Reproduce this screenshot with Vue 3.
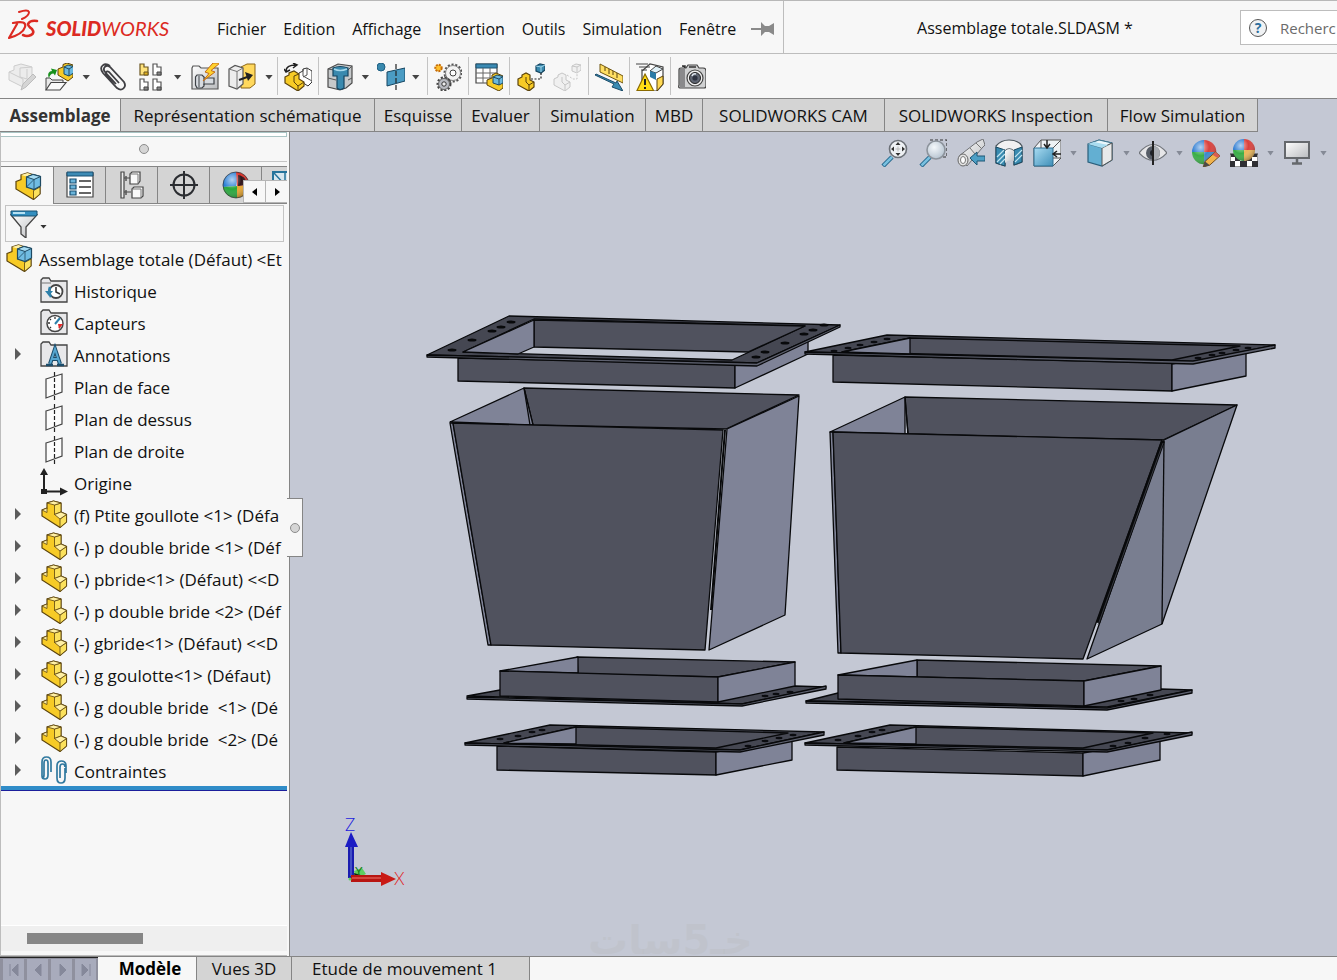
<script setup>
const menus = ['Fichier', 'Edition', 'Affichage', 'Insertion', 'Outils', 'Simulation', 'Fenêtre']

const toolGroups = [
  ['edit-part', 'open-asm', 'v', 'clip', 'pattern', 'v', 'fastener', 'move', 'v'],
  ['hidden'],
  ['feature', 'v', 'refgeo', 'v'],
  ['gears'],
  ['bom'],
  ['explode', 'explode-off'],
  ['measure'],
  ['perf'],
  ['camera'],
]

const ribbonTabs = [
  'Assemblage', 'Représentation schématique', 'Esquisse', 'Evaluer', 'Simulation',
  'MBD', 'SOLIDWORKS CAM', 'SOLIDWORKS Inspection', 'Flow Simulation',
]

const viewTools = [
  'zoom-fit', 'zoom-area', 'prev-view', 'section', 'orient', 'v', 'display', 'v',
  'eye', 'v', 'appearance', 'scene', 'v', 'monitor', 'v',
]

const panelTabs = ['asm', 'props', 'config', 'target', 'sphere', 'cam']

const tree = [
  { icon: 'history', label: 'Historique' },
  { icon: 'sensor', label: 'Capteurs' },
  { icon: 'annot', label: 'Annotations', open: true },
  { icon: 'plane', label: 'Plan de face' },
  { icon: 'plane', label: 'Plan de dessus' },
  { icon: 'plane', label: 'Plan de droite' },
  { icon: 'origin', label: 'Origine' },
  { icon: 'part', label: '(f) Ptite goullote <1> (Défa', open: true },
  { icon: 'part', label: '(-) p double bride <1> (Déf', open: true },
  { icon: 'part', label: '(-) pbride<1> (Défaut) <<D', open: true },
  { icon: 'part', label: '(-) p double bride <2> (Déf', open: true },
  { icon: 'part', label: '(-) gbride<1> (Défaut) <<D', open: true },
  { icon: 'part', label: '(-) g goulotte<1> (Défaut)', open: true },
  { icon: 'part', label: '(-) g double bride  <1> (Dé', open: true },
  { icon: 'part', label: '(-) g double bride  <2> (Dé', open: true },
  { icon: 'mates', label: 'Contraintes', open: true },
]

const navButtons = [
  { name: 'Premier', d: 'M7 5V17M15 5L9 11L15 17Z' },
  { name: 'Précédent', d: 'M14 5L8 11L14 17Z' },
  { name: 'Suivant', d: 'M9 5L15 11L9 17Z' },
  { name: 'Dernier', d: 'M15 5V17M7 5L13 11L7 17Z' },
]

const holes = [
  [511, 322], [501, 327], [492, 331], [472, 340], [452, 350],
  [813, 330], [804, 334], [785, 343], [765, 352], [756, 357], [824, 325],
]
const smallHoles = [
  [887, 339], [874, 342], [860, 345], [848, 348], [834, 351],
  [1248, 348], [1236, 350], [1222, 353], [1212, 355], [1198, 358],
  [542, 730], [532, 732], [518, 736], [500, 739], [793, 735], [779, 738], [765, 741], [748, 746],
  [882, 730], [872, 732], [858, 736], [838, 740], [1167, 734], [1145, 738], [1128, 743], [1113, 746],
  [790, 692], [776, 694], [765, 696], [1150, 695], [1134, 699], [1121, 701],
]
</script>

<template>
  <div class="app">
    <svg class="defs" aria-hidden="true">
      <defs>
        <linearGradient id="g-steel" x1="0" y1="0" x2="1" y2="1"><stop offset="0" stop-color="#fff" /><stop offset="1" stop-color="#b9bbbe" /></linearGradient>
        <linearGradient id="g-blue" x1="0" y1="0" x2="1" y2="1"><stop offset="0" stop-color="#a9dcf2" /><stop offset="1" stop-color="#3f8fb8" /></linearGradient>
        <radialGradient id="g-lens" cx=".4" cy=".35" r=".7"><stop offset="0" stop-color="#f4f8fb" /><stop offset="1" stop-color="#b3c1ce" /></radialGradient>
        <radialGradient id="g-shade" cx=".35" cy=".3" r=".8"><stop offset="0" stop-color="#fff" stop-opacity=".65" /><stop offset=".45" stop-color="#fff" stop-opacity="0" /><stop offset="1" stop-color="#000" stop-opacity=".4" /></radialGradient>
      </defs>
      <symbol id="part" viewBox="0 0 28 28">
        <path d="M2 10L7 8V3L13.500 1L21 3V12L26.500 14.500V22L20 27.500L2 16Z" fill="#f7cb26" stroke="#5b430d" stroke-width="1.200" />
        <path d="M14.500 5L21 3V12L14.500 14.500ZM20 19L26.500 14.500V22L20 27.500Z" fill="#fbe15c" stroke="#5b430d" stroke-width=".8" />
        <path d="M7 3L13.500 1L21 3L14.500 5ZM14.500 14.500L21 12L26.500 14.500L20 19ZM2 10L7 8V12.500Z" fill="#fff0a5" stroke="#5b430d" stroke-width=".8" />
      </symbol>
      <symbol id="asm" viewBox="0 0 28 28">
        <path d="M2 9.500L7 7.500V3L13.500 1L26 5V22L19.500 27.500L2 17Z" fill="#f7cb26" stroke="#5b430d" stroke-width="1.200" />
        <path d="M7 3L13.500 1L18 2.500L12.500 4.500Z" fill="#fff0a5" />
        <path d="M19.500 18.500L26 15V22L19.500 27.500Z" fill="#fbe15c" stroke="#5b430d" stroke-width=".8" />
        <path d="M12.500 5L19 2.500L26.500 4.500V14L20 17.500L12.500 15Z" fill="#70bce2" stroke="#1e4a63" stroke-width="1.200" />
        <path d="M12.500 5L19 2.500L26.500 4.500L20 7.500Z" fill="#a7dcf3" stroke="#1e4a63" />
        <path d="M20 7.500V17.500M12.500 15L20 7.500" fill="none" stroke="#1e4a63" stroke-width=".8" />
      </symbol>
      <symbol id="edit-part" viewBox="0 0 28 28">
        <g fill="#ececec" stroke="#cdcdcd">
          <path d="M1 9L6 7V3L13 1L24 4V17L15 24L1 17Z" /><path d="M12 5L24 4M12 5V14L19 16V6M1 9L15 16V24" fill="none" />
          <path d="M13 27L15 21L25 11L28 14L18 24Z" fill="#d5d5d5" stroke="#bdbdbd" />
        </g>
      </symbol>
      <symbol id="open-asm" viewBox="0 0 28 28">
        <path d="M13 6L18 4V1.500L22 0L28 2V14L23 18L13 12Z" fill="#f7cb26" stroke="#5b430d" />
        <path d="M19 4L23 2L28.500 3.500V10L24 13L19 11Z" fill="#6bb9de" stroke="#1e4a63" /><path d="M19 4L24 6V13M24 6L28 3.500" fill="none" stroke="#1e4a63" />
        <path d="M1 27V15H5L7 17H18V20" fill="#e9e9e9" stroke="#444" /><path d="M1 27L6 19.500H21L15 27Z" fill="#fafafa" stroke="#444" stroke-width="1.200" />
        <path d="M4 15C2 11 4 8 7 8L6 5.500L12 7L10 12.500L8.500 10.500C6 10.500 5 12 4 15Z" fill="#18911d" />
      </symbol>
      <symbol id="clip" viewBox="0 0 28 28">
        <path d="M17 21L6 9C3 5 7 1 11 4L25 19C28 24 23 29 18 25L4 10C-1 3 6-1 11 3M20 20L10 9C7 7 6 11 8 12L16 20" fill="none" stroke="#3f3f43" stroke-width="1.800" />
      </symbol>
      <symbol id="pattern" viewBox="0 0 28 28">
        <g fill="#fff" stroke="#555" stroke-width="1.200">
          <path d="M3 1H7V4H11V12H3Z" fill="#ffe37c" stroke="#6b5520" /><path d="M16 1H20V4H24V12H16ZM3 16H7V19H11V27H3ZM16 16H20V19H24V27H16Z" />
        </g>
        <path d="M7 9H11V12H7Z" fill="#e0b11c" stroke="#6b5520" /><path d="M20 9H24V12H20ZM7 24H11V27H7ZM20 24H24V27H20Z" fill="#888" stroke="#444" />
      </symbol>
      <symbol id="fastener" viewBox="0 0 28 28">
        <path d="M1 5L2 3H8L10 5H27V26H1Z" fill="url(#g-steel)" stroke="#555" stroke-width="1.200" />
        <path d="M6 12H11L13 14V15H23V21H13V23L11 25H6L4.500 22V14Z" fill="#d7dbe0" stroke="#3e4247" stroke-width="1.200" /><path d="M8 13V24M13 15V22" stroke="#3e4247" />
        <path d="M22 0L14 9L18 10.500L12 18L24 9L20 7.500L29 0Z" fill="#ffd22e" stroke="#c36a16" />
      </symbol>
      <symbol id="move" viewBox="0 0 28 28">
        <path d="M13 4L19 1H27V21L22 25H13Z" fill="#ffd85d" stroke="#8b6515" /><path d="M1 6L7 2.500L15 5V21L9 26L1 23Z" fill="#ededed" stroke="#555" stroke-width="1.200" /><path d="M1 6L9 8.500L15 5M9 8.500V26" fill="none" stroke="#777" />
        <path d="M11 17L22 13" stroke="#222" stroke-width="2" /><path d="M17 9L25 12L20 18Z" fill="#222" />
      </symbol>
      <symbol id="hidden" viewBox="0 0 28 28">
        <path d="M15 10L19 8V6L23 5L28 8V19L24 23L13 16Z" fill="#fff" stroke="#333" /><path d="M19 6V13L28 18M23 5V12L19 14" fill="none" stroke="#555" />
        <path d="M1 14L5 12V10L10 8L15 11V16L20 19V23L14 28L1 20Z" fill="#f7cb26" stroke="#5b430d" stroke-width="1.200" /><path d="M14 23L20 19M10 13L15 11M10 13V19L14 23V28" fill="none" stroke="#5b430d" />
        <path d="M2 8C2 3 6 2 12 2M9 0L13 2L9 5M0 6L2 9L6 7" fill="none" stroke="#222" stroke-width="1.500" />
      </symbol>
      <symbol id="feature" viewBox="0 0 28 28">
        <path d="M2 6L12 1L26 3V20L20 25L14 27L2 24Z" fill="#c6c9cb" stroke="#4a4a4a" stroke-width="1.200" /><path d="M2 15L10 17M22 17L26 15M2 6L20 9L26 3" fill="none" stroke="#555" />
        <path d="M7 5Q14 2 22 5V13H18V25Q14 28 11 25V13H7Z" fill="#3989ae" stroke="#164560" stroke-width="1.200" /><path d="M8 6Q14 9 21 6" stroke="#a7d9ec" fill="none" stroke-width="1.500" />
      </symbol>
      <symbol id="refgeo" viewBox="0 0 28 28">
        <circle cx="4" cy="4" r="4" fill="#3989ae" stroke="#1f5f82" /><path d="M10 9L28 5V18L10 23Z" fill="#4b9cc4" stroke="#164560" /><path d="M19 1V27" stroke="#222" stroke-dasharray="5 2" stroke-width="1.200" />
      </symbol>
      <symbol id="gears" viewBox="0 0 28 28">
        <circle cx="19" cy="10" r="8" fill="none" stroke="#555" stroke-width="3" stroke-dasharray="2 1.600" /><circle cx="19" cy="10" r="7.500" fill="#f3f3f3" stroke="#888" /><circle cx="19" cy="10" r="3" fill="#fff" stroke="#444" />
        <circle cx="10" cy="21" r="6" fill="none" stroke="#444" stroke-width="3" stroke-dasharray="2 1.500" /><circle cx="10" cy="21" r="5.500" fill="#b8bac0" stroke="#666" /><circle cx="10" cy="21" r="2.200" fill="#eee" stroke="#333" />
        <circle cx="4.500" cy="5" r="3.200" fill="#ffc02d" stroke="#c56c0b" stroke-width="2" stroke-dasharray="2 1" />
      </symbol>
      <symbol id="bom" viewBox="0 0 28 28">
        <path d="M1 1H22V20H1Z" fill="#fff" stroke="#444" stroke-width="1.200" /><path d="M1 1H22V5H1Z" fill="#3b8ab3" stroke="#1f5473" /><path d="M1 10H22M1 15H22M8 5V20M15 5V20" stroke="#666" />
        <path d="M12 17L17 15V12L21 10L28 13V25L24 28L12 22Z" fill="#f7cb26" stroke="#5b430d" /><path d="M18 14L22 12L28 13.500V20L24 22L18 20Z" fill="#6bb9de" stroke="#1e4a63" /><path d="M18 14L24 16L28 13.500M24 16V22" fill="none" stroke="#1e4a63" />
      </symbol>
      <symbol id="explode" viewBox="0 0 28 28">
        <path d="M1 16L5 14V12L9 10L13 12V17L17 19V24L12 28L1 22Z" fill="#f7cb26" stroke="#5b430d" stroke-width="1.200" /><path d="M9 14V19L12 22V28M12 22L17 19" fill="none" stroke="#5b430d" />
        <path d="M19 3L23 1L28 2V7L24 10L19 8Z" fill="#3989ae" stroke="#164560" stroke-width="1.200" /><path d="M19 3L24 4L28 2M24 4V9" fill="none" stroke="#a5d7eb" /><path d="M14 16H24V10" fill="none" stroke="#222" stroke-dasharray="2 1.500" stroke-width="1.200" />
      </symbol>
      <symbol id="explode-off" viewBox="0 0 28 28">
        <g fill="#f0f0f0" stroke="#c6c6c6"><path d="M1 16L5 14V12L9 10L13 12V17L17 19V24L12 28L1 22Z" /><path d="M9 14V19L12 22V28M12 22L17 19" /><path d="M19 3L23 1L28 2V7L24 10L19 8Z" /><path d="M19 3L24 4L28 2M24 4V9" /><path d="M14 12L20 16H24V10" fill="none" stroke-dasharray="2 1.500" /></g>
      </symbol>
      <symbol id="measure" viewBox="0 0 28 28">
        <path d="M5 1L28 13V20L5 9Z" fill="#ffdf62" stroke="#6f5511" /><path d="M10 4V8M14 6V11M18 8V12M22 10V15" stroke="#5b430d" /><path d="M0 12L19 21L17 24L28 28L22 18L21 20L1 11Z" fill="#398bb2" stroke="#1b4c69" />
      </symbol>
      <symbol id="perf" viewBox="0 0 28 28">
        <path d="M6 8L14 1L27 4V21L21 28H12L6 20Z" fill="#fff" stroke="#444" stroke-width="1.200" /><path d="M14 8L20 3L27 6L20 10Z" fill="#dff0f7" stroke="#444" /><path d="M14 8L20 10V17L14 14Z" fill="#2a7ba6" /><path d="M21 16L27 13V21L21 28Z" fill="#ffda55" stroke="#5b430d" />
        <path d="M0 1H12M3 4H14M5 7H11" stroke="#444" /><path d="M9 11L17.500 27.500H1Z" fill="#ffdc16" stroke="#8a6a00" stroke-width="1.200" /><path d="M9 16V22M9 24V26" stroke="#222" stroke-width="2" />
      </symbol>
      <symbol id="camera" viewBox="0 0 28 28">
        <path d="M1 7Q1 5 3 5H8L10 2H19L21 5H25Q28 5 28 8V23Q28 25 26 25H2Q0 25 1 22Z" fill="#d0d1d2" stroke="#444" stroke-width="1.200" /><path d="M2 6V24H7V6Z" fill="#8a8a8c" /><path d="M4 3H7V5M11 4H18" stroke="#333" stroke-width="1.500" />
        <circle cx="17" cy="15" r="8" fill="#eee" stroke="#444" stroke-width="1.200" /><circle cx="17" cy="15" r="5.500" fill="#606673" stroke="#222" /><circle cx="17" cy="15" r="2.600" fill="#2e3341" /><path d="M14 13Q15 10 18 11" stroke="#dfe6ee" fill="none" stroke-width="1.500" />
      </symbol>
      <symbol id="zoom-fit" viewBox="0 0 28 28">
        <path d="M2 27L11 18" stroke="#1f6289" stroke-width="4.500" /><path d="M2.500 26.500L11 18" stroke="#78c0df" stroke-width="2.500" /><circle cx="17" cy="10" r="8.500" fill="#eef1f4" stroke="#6c7178" stroke-width="1.600" />
        <path d="M17 3L19.500 6H14.500ZM17 17L19.500 14H14.500ZM10 10L13 7.500V12.500ZM24 10L21 7.500V12.500Z" fill="#333" /><path d="M14.500 10H19.500M17 7.500V12.500" stroke="#bbb" />
      </symbol>
      <symbol id="zoom-area" viewBox="0 0 28 28">
        <path d="M2 27L11 18" stroke="#1f6289" stroke-width="4.500" /><path d="M2.500 26.500L11 18" stroke="#78c0df" stroke-width="2.500" /><path d="M11 1H28V18H22" fill="none" stroke="#333" stroke-dasharray="3 2" stroke-width="1.200" /><circle cx="17" cy="11" r="9" fill="url(#g-lens)" stroke="#8d949c" stroke-width="1.600" />
      </symbol>
      <symbol id="prev-view" viewBox="0 0 28 28">
        <path d="M2 17L20 3L26 0L28 6L25 9L10 27Z" fill="url(#g-steel)" stroke="#707276" /><ellipse cx="6" cy="21" rx="5" ry="6" fill="#e4e4e4" stroke="#666" /><ellipse cx="6" cy="21" rx="2.500" ry="3.500" fill="#fff" stroke="#777" /><path d="M13 9L18 15M19 4L24 9" stroke="#777" />
        <path d="M13 19L20 13V17H28V22H20V26Z" fill="#4d9fc5" stroke="#1e5675" />
      </symbol>
      <symbol id="section" viewBox="0 0 28 28">
        <path d="M1 7Q6 1 14 1Q23 1 27 7V23L19 26V12Q14 8 10 12V27L1 24Z" fill="#f1f1f1" stroke="#4b555b" stroke-width="1.200" /><path d="M1 8L10 11V27L1 24ZM27 8L19 11V26L27 23Z" fill="#398bb0" stroke="#1b4b64" /><path d="M2 18L9 11M2 23L10 15M5 25L10 20M20 18L27 11M20 23L27 16" stroke="#c1e4f0" stroke-width="1.200" /><path d="M10 12Q14 8 19 12V22Q14 20 10 24Z" fill="url(#g-steel)" />
      </symbol>
      <symbol id="orient" viewBox="0 0 28 28">
        <path d="M1 9L8 1H28V19L20 27H1Z" fill="#eef2f5" stroke="#555" /><path d="M1 9H20V27H1Z" fill="url(#g-blue)" stroke="#2d6f93" /><path d="M20 9L28 1M8 1V9M20 19H28" stroke="#555" fill="none" /><path d="M14 1V8M11 5L14 9L17 5M28 15H21M24 12L20 15L24 18" stroke="#222" stroke-width="1.500" fill="none" />
      </symbol>
      <symbol id="display" viewBox="0 0 28 28">
        <path d="M2 5L13 1L26 4V21L16 27L2 23Z" fill="#63afd2" stroke="#2a5f7b" stroke-width="1.200" /><path d="M2 5L13 1L26 4L16 9Z" fill="#e9f6fb" stroke="#41768f" /><path d="M16 9L26 4V21L16 27Z" fill="#e7e9ea" stroke="#555" /><path d="M2 5L8 3L22 6L16 9Z" fill="#a9dcf0" />
      </symbol>
      <symbol id="eye" viewBox="0 0 28 28">
        <path d="M0 14Q14-3 28 14Q14 29 0 14Z" fill="#e6e6e8" stroke="#70747a" stroke-width="1.200" /><circle cx="14" cy="14" r="7" fill="#565c66" /><circle cx="14" cy="14" r="3" fill="#1e2228" /><path d="M14 7A7 7 0 0 1 14 21Z" fill="#a9adb3" /><path d="M14 2V26" stroke="#222" stroke-width="2" />
      </symbol>
      <symbol id="sphere" viewBox="0 0 28 28">
        <path d="M14 1A13 13 0 0 0 1 16L14 15L17 1Z" fill="#287ed6" /><path d="M14 1A13 13 0 0 1 27 14L15 15Z" fill="#d92f27" /><path d="M1 16A13 13 0 0 0 15 27V15Z" fill="#28a73c" /><path d="M27 14A13 13 0 0 1 15 27V15Z" fill="#e7a52e" /><path d="M16 4Q26 6 23 14L16 15Z" fill="#30151a" /><circle cx="14" cy="14" r="13" fill="url(#g-shade)" stroke="#333" stroke-width=".7" />
      </symbol>
      <symbol id="appearance" viewBox="0 0 30 30">
        <path d="M13 1A13 13 0 0 0 0 14H13Z" fill="#2d7cd2" /><path d="M13 1A13 13 0 0 1 26 15L13 14Z" fill="#da403c" /><path d="M0 14A13 13 0 0 0 13 27V14Z" fill="#39ae46" /><path d="M26 14A13 13 0 0 1 13 27V14Z" fill="#3d89ca" /><circle cx="13" cy="14" r="13" fill="url(#g-shade)" />
        <path d="M12 30L14 24L25 14L30 18L19 28Z" fill="#f0b34c" stroke="#6c4515" /><path d="M25 14L30 18L27 20L22 17Z" fill="#d95c52" /><path d="M12 30L14 24L19 28Z" fill="#4a4a4a" />
      </symbol>
      <symbol id="scene" viewBox="0 0 28 28">
        <path d="M0 15H28V28H0Z" fill="#fff" stroke="#333" /><path d="M1 15H6V18H1ZM11 15H16V18H11ZM21 15H27V18H21ZM5 18H10V22H5ZM16 18H22V22H16ZM0 22H5V28H0ZM10 22H17V28H10ZM22 22H28V28H22Z" fill="#303034" />
        <path d="M14 0A11 11 0 0 0 3 11H14Z" fill="#2d7cd2" /><path d="M14 0A11 11 0 0 1 25 11H14Z" fill="#da403c" /><path d="M3 11A11 11 0 0 0 14 22V11Z" fill="#39ae46" /><path d="M25 11A11 11 0 0 1 14 22V11Z" fill="#eab658" /><circle cx="14" cy="11" r="11" fill="url(#g-shade)" />
      </symbol>
      <symbol id="monitor" viewBox="0 0 28 28">
        <path d="M2 3H26V19H2Z" fill="url(#g-steel)" stroke="#65686c" stroke-width="2" /><path d="M14 20V24M9 24.500H19" stroke="#65686c" stroke-width="2.500" />
      </symbol>
      <symbol id="props" viewBox="0 0 28 28">
        <path d="M1 2H27V26H1Z" fill="#fff" stroke="#444" stroke-width="1.200" /><path d="M1 1H27V5H1Z" fill="#3d8bb5" stroke="#184e70" /><path d="M4 8H10V12H4ZM4 14H10V18H4ZM4 20H10V24H4Z" fill="#6ab4da" stroke="#184e70" stroke-width="1.200" /><path d="M13 10H25M13 16H25M13 22H25" stroke="#333" stroke-width="1.300" />
      </symbol>
      <symbol id="config" viewBox="0 0 28 28">
        <path d="M3 1H6V27H3ZM6 7H12M6 21H13" fill="#eee" stroke="#444" stroke-width="1.200" /><path d="M12 3L14 1H22V10L20 13H12ZM14 18L16 16H25V25L23 27H14Z" fill="#fafafa" stroke="#444" stroke-width="1.200" /><path d="M12 3H20V13M14 18H23V27" fill="none" stroke="#777" /><path d="M8 5V10M8 19V24" stroke="#555" stroke-width="1.500" />
      </symbol>
      <symbol id="target" viewBox="0 0 28 28">
        <circle cx="14" cy="14" r="10.500" fill="none" stroke="#2b2d31" stroke-width="2" /><path d="M14 0V28M0 14H28" stroke="#2b2d31" stroke-width="2" />
      </symbol>
      <symbol id="cam" viewBox="0 0 28 28">
        <path d="M1 1H27V27H1Z" fill="#d7e7ef" stroke="#25749c" stroke-width="2" /><path d="M2 2L13 14L25 2M13 2V20" stroke="#25749c" stroke-width="1.500" fill="none" />
      </symbol>
      <symbol id="history" viewBox="0 0 28 28">
        <path d="M1 26V4L3 2H9L11 5H27V26Z" fill="#e8e8ea" stroke="#444" stroke-width="1.300" /><path d="M1 7H11" stroke="#777" /><circle cx="16" cy="15.500" r="6.500" fill="#fff" stroke="#444" stroke-width="1.800" /><path d="M16 11V16L20 18" fill="none" stroke="#333" stroke-width="1.600" /><path d="M10 11Q8 16 11 21" stroke="#2d80aa" stroke-width="2.500" fill="none" /><path d="M5 15H13L9 20Z" fill="#2d80aa" />
      </symbol>
      <symbol id="sensor" viewBox="0 0 28 28">
        <path d="M1 26V4L3 2H9L11 5H27V26Z" fill="#e8e8ea" stroke="#444" stroke-width="1.300" /><circle cx="15" cy="15.500" r="8" fill="#fff" stroke="#444" stroke-width="1.500" /><path d="M15 9V11M8 15H10M10 11L11 12M20 20L19 19M10 20L11 19" stroke="#333" stroke-width="1.300" /><path d="M15 16L20 10" stroke="#2d80aa" stroke-width="2" /><path d="M18 16L23 16L19 21Z" fill="#e52a2a" />
      </symbol>
      <symbol id="annot" viewBox="0 0 28 28">
        <path d="M1 26V4L3 2H9L11 5H27V26Z" fill="#e8e8ea" stroke="#444" stroke-width="1.300" />
        <path d="M10 24L15 9L20 24M12 19H18" fill="none" stroke="#1c4d6b" stroke-width="4" /><path d="M10 24L15 9L20 24M12 19H18" fill="none" stroke="#56a6d0" stroke-width="2" /><path d="M6 25H13M17 25H24" stroke="#1c4d6b" stroke-width="2.500" />
      </symbol>
      <symbol id="plane" viewBox="0 0 28 28">
        <path d="M6 7L22 2V20L6 26Z" fill="#fcfcfc" stroke="#444" stroke-width="1.200" /><path d="M14.500 0V28" stroke="#222" stroke-width="1.200" stroke-dasharray="4 2" />
      </symbol>
      <symbol id="origin" viewBox="0 0 28 28">
        <path d="M4 24V5M4 23.500H22" stroke="#222" stroke-width="2" /><path d="M4 0L8 7H0ZM28 23.500L20 19.500V27.500Z" fill="#222" /><path d="M1 21H7V26H1Z" fill="#222" />
      </symbol>
      <symbol id="mates" viewBox="0 0 28 28">
        <path d="M8 19V7Q8 4 6 4Q4 4 4 7V19Q4 22 2 22M11 16V6Q11 1 6.500 1Q2 1 2 6V20Q2 23 5 23Q8 23 8 19M17 13V22Q17 27 21 27Q25 27 25 22V12M20 22V11Q20 8 22.500 8Q25 8 25 11M17 19V10Q17 5 21.500 5Q26 5 26 10V17" fill="none" stroke="#31799f" stroke-width="1.700" />
      </symbol>
      <symbol id="funnel" viewBox="0 0 28 28">
        <path d="M1 5L11 17V24L16 28V17L27 5Z" fill="url(#g-steel)" stroke="#444" stroke-width="1.300" /><path d="M1 1H27V5L26 6H2L1 5Z" fill="#338fc0" stroke="#174e6f" /><path d="M3 3H15" stroke="#b5e1f3" stroke-width="2" />
      </symbol>
      <symbol id="pin" viewBox="0 0 24 20">
        <path d="M0 9H10V3L14 7H18L23 4V16L18 13H14L10 17V11H0Z" fill="#8a8a8a" />
      </symbol>
      <symbol id="ds" viewBox="0 0 32 32">
        <g fill="none" stroke="#dc2a22" stroke-linecap="round" stroke-linejoin="round">
          <path d="M11 3Q20 0 21 3Q21 7 14 10" stroke-width="2" /><path d="M5 14Q19 11 17 18Q15 25 1 29L9 15" stroke-width="2.200" /><path d="M29 12Q22 11 20 15Q20 17 24 20Q27 24 23 26Q19 28 15 26" stroke-width="2.600" />
        </g>
      </symbol>
    </svg>

    <header class="titlebar">
      <div class="brand-menu">
        <a class="brand" href="#" aria-label="SOLIDWORKS">
          <svg class="ds"><use href="#ds" /></svg>
          <span class="wordmark"><b>SOLID</b>WORKS</span>
        </a>
        <nav class="menus"><button v-for="m in menus" :key="m" type="button">{{ m }}</button></nav>
        <button class="pin" type="button" aria-label="Épingler"><svg><use href="#pin" /></svg></button>
      </div>
      <h1 class="doc">Assemblage totale.SLDASM *</h1>
      <label class="search">
        <span class="help">?</span>
        <input type="text" placeholder="Recherc" aria-label="Recherche">
      </label>
    </header>

    <div class="toolbar">
      <div v-for="(g, gi) in toolGroups" :key="gi" class="group">
        <template v-for="(t, ti) in g" :key="ti">
          <button v-if="t === 'v'" class="drop" type="button" aria-label="Plus"></button>
          <button v-else class="tool" type="button" :aria-label="t"><svg><use :href="'#' + t" /></svg></button>
        </template>
      </div>
    </div>

    <nav class="ribbon">
      <button v-for="(t, i) in ribbonTabs" :key="t" type="button" :class="{ active: i === 0 }">{{ t }}</button>
    </nav>

    <main class="work">
      <aside class="panel">
        <div class="strip"></div>
        <div class="splitter"><span class="knob"></span></div>
        <div class="ptabs">
          <button v-for="(p, i) in panelTabs" :key="p" type="button" :class="{ active: i === 0 }" :aria-label="p"><svg><use :href="'#' + p" /></svg></button>
          <div class="pscroll">
            <button type="button" aria-label="Gauche"><svg viewBox="0 0 8 10"><path d="M6 1L1 5L6 9Z" /></svg></button>
            <button type="button" aria-label="Droite"><svg viewBox="0 0 8 10"><path d="M2 1L7 5L2 9Z" /></svg></button>
          </div>
        </div>
        <button class="filter" type="button" aria-label="Filtre"><svg><use href="#funnel" /></svg><span class="caret"></span></button>
        <div class="tree">
          <div class="row root"><svg><use href="#asm" /></svg><span>Assemblage totale (Défaut) &lt;Et</span></div>
          <div v-for="(r, i) in tree" :key="i" class="row">
            <button v-if="r.open" class="expand" type="button" aria-label="Développer"></button>
            <i v-else class="blank"></i>
            <svg><use :href="'#' + r.icon" /></svg>
            <span>{{ r.label }}</span>
          </div>
        </div>
        <div class="rollback"></div>
        <div class="hscroll"><div class="thumb"></div></div>
        <div class="foot"></div>
        <button class="handle" type="button" aria-label="Réduire le panneau"><span class="knob"></span></button>
      </aside>

      <section class="viewport">
        <svg class="model" viewBox="290 132 1047 824" preserveAspectRatio="xMinYMin meet">
          <g stroke="#08090b" stroke-width="1.300" stroke-linejoin="round">
            <!-- upper left flange -->
            <path class="dk" d="M458 358L735 364V388L458 381Z" />
            <path class="lt" d="M735 365L808 335V354L735 388Z" />
            <path class="fl" fill-rule="evenodd" d="M427 355L509 316L840 325L757 363ZM463 352L732 360L805 326L534 319Z" />
            <path class="dk" d="M534 320L805 326L748 352L534 347Z" />
            <path class="lt" d="M463 352L534 320V347L518 354Z" />
            <path class="rim" d="M427 355L757 363L840 325V327L757 366L427 357Z" />
            <!-- left hopper -->
            <path class="dk" d="M524 388L799 395L726 429L533 425Z" />
            <path class="lt" d="M450 422L524 388L533 425Z" />
            <path d="M524 388L530 425" />
            <path class="lt" d="M450 423L453 423L491 645L488 645Z" />
            <path class="dk" d="M453 423L723 430L705 650L491 645Z" />
            <path class="lt" d="M727 429L799 396L785 615L709 650Z" />
            <path d="M725 430L711 610" stroke-width="2" />
            <!-- upper right flange -->
            <path class="dk" d="M833 355L1172 363V391L833 382Z" />
            <path class="lt" d="M1172 364L1246 349V376L1172 391Z" />
            <path class="fl" d="M805 352L887 335L1275 345L1193 362Z" />
            <path class="dk" d="M910 338L1240 346L1172 360L842 352Z" />
            <path class="lt" d="M842 352L910 338V354Z" />
            <path class="rim" d="M805 352L1193 361L1275 345V348L1193 364L805 354Z" />
            <!-- right hopper -->
            <path class="dk" d="M905 397L1237 405L1163 440L908 434Z" />
            <path class="lt" d="M830 432L905 397V434Z" />
            <path d="M905 397L908 434" />
            <path class="lt" d="M830 432H833L841 653H838Z" />
            <path class="dk" d="M833 432L1162 440L1083 659L841 653Z" />
            <path class="slate" d="M1164 440L1237 405L1162 624L1087 659Z" />
            <path d="M1164 441L1162 624" />
            <path d="M1163 441L1098 623" stroke-width="4" />
            <path d="M1163 443L1098 625" stroke="#40424b" stroke-width=".8" />
            <!-- middle left collar -->
            <path class="fl" d="M467 696L500 690L795 686L826 687L742 704Z" />
            <path class="rim" d="M467 697L742 704L826 686V689L742 706L467 699Z" />
            <path class="dk" d="M577 657L795 662L718 677L578 674Z" />
            <path class="lt" d="M500 671L578 657V673Z" />
            <path class="dk" d="M500 671L718 677V702L500 696Z" />
            <path class="lt" d="M718 677L795 662V686L718 702Z" />
            <!-- middle right collar -->
            <path class="fl" d="M806 701L838 693L1161 689L1192 690L1107 707Z" />
            <path class="rim" d="M806 701L1107 708L1192 690V693L1107 710L806 703Z" />
            <path class="dk" d="M917 660L1161 666L1084 681L917 677Z" />
            <path class="lt" d="M838 675L917 660V677Z" />
            <path class="dk" d="M838 675L1084 681V706L838 699Z" />
            <path class="lt" d="M1084 681L1161 666V690L1084 706Z" />
            <!-- lower left flange -->
            <path class="dk" d="M497 746L716 752V775L497 770Z" />
            <path class="lt" d="M716 752L792 738V760L716 775Z" />
            <path class="fl" d="M465 743L550 725L824 732L740 750Z" />
            <path class="dk" d="M576 727L788 733L716 748L504 743Z" />
            <path class="lt" d="M504 743L576 727V744Z" />
            <path class="rim" d="M465 743L740 750L824 732V735L740 752L465 745Z" />
            <!-- lower right flange -->
            <path class="dk" d="M837 747L1083 753V776L837 770Z" />
            <path class="lt" d="M1083 753L1160 739V760L1083 776Z" />
            <path class="fl" d="M805 743L890 725L1192 733L1107 750Z" />
            <path class="dk" d="M916 727L1153 733L1083 748L844 743Z" />
            <path class="lt" d="M844 743L916 727V744Z" />
            <path class="rim" d="M805 743L1107 750L1192 732V735L1107 752L805 745Z" />
          </g>
          <ellipse v-for="(h, i) in holes" :key="'h' + i" :cx="h[0]" :cy="h[1]" rx="4.500" ry="1.500" fill="#08090b" />
          <ellipse v-for="(h, i) in smallHoles" :key="'s' + i" :cx="h[0]" :cy="h[1]" rx="3.500" ry="1.200" fill="#0b0c10" />
          <!-- axes -->
          <path d="M354 871L362 868L366 874L356 879Z" fill="#5fce61" /><path d="M354 873L364 876L355 879Z" fill="#142414" />
          <path d="M348 847H354V878H348Z" fill="#1a1cb0" /><path d="M351 847V876" stroke="#6d83d8" /><path d="M351 832L358 847H345Z" fill="#1b1cc4" />
          <path d="M351 875H382V882H351Z" fill="#b81512" /><path d="M352 878H381" stroke="#f0786f" /><path d="M381 872L396 879L381 886Z" fill="#c91a15" />
          <circle cx="350" cy="879" r="1.500" fill="#5fce61" />
          <text class="axis" x="345" y="831" fill="#2222dd">Z</text><text class="axis" x="394" y="885" fill="#e01d1d">X</text><text class="axis small" x="355" y="875" fill="#0d7d14">Y</text>
        </svg>
        <div class="views">
          <template v-for="(t, i) in viewTools" :key="i">
            <button v-if="t === 'v'" class="vdrop" type="button" aria-label="Plus"></button>
            <button v-else class="vtool" type="button" :aria-label="t"><svg><use :href="'#' + t" /></svg></button>
          </template>
        </div>
        <div class="mark" dir="rtl">خـ5سات</div>
      </section>
    </main>

    <footer class="bottom">
      <div class="nav"><button v-for="n in navButtons" :key="n.name" type="button" :aria-label="n.name"><svg viewBox="0 0 22 22"><path :d="n.d" /></svg></button></div>
      <button class="btab active" type="button">Modèle</button>
      <button class="btab" type="button">Vues 3D</button>
      <button class="btab study" type="button">Etude de mouvement 1</button>
    </footer>
  </div>
</template>

<style>
body { margin: 0; background: #f7f7f7; }
</style>

<style scoped>
* { box-sizing: border-box; }
.app { min-height: 100vh; display: flex; flex-direction: column; background: #f7f7f7; color: #111; font: 17px/24px "Open Sans", "Noto Sans", sans-serif; overflow: hidden; }
.defs { position: absolute; width: 0; height: 0; }
button { font: inherit; color: inherit; border: 0; background: none; padding: 0; margin: 0; white-space: nowrap; }
svg { display: block; flex: none; }
.titlebar { display: flex; height: 54px; border-top: 1px solid #b8b8b8; border-bottom: 1px solid #bdbdbd; font-size: 16px; }
.brand-menu { flex: none; width: 784px; border-right: 1px solid #bdbdbd; display: flex; align-items: center; padding: 3px 8px 0; }
.brand { display: flex; align-items: center; width: 209px; color: #dc2a22; text-decoration: none; }
.ds { width: 32px; height: 32px; margin-top: -8px; }
.wordmark { font: italic 20px/24px Lato, sans-serif; margin-left: 6px; margin-top: -1px; }
.wordmark b { font-weight: 900; }
.menus { display: flex; gap: 17px; }
.pin { margin-left: auto; }
.pin svg { width: 24px; height: 20px; }
.doc { flex: 1; margin: 0; font: inherit; text-align: center; align-self: center; padding: 2px 0 0 26px; }
.search { flex: none; width: 97px; height: 35px; margin-top: 9px; background: #fff; border: 1px solid #bdbdbd; border-right: 0; display: flex; align-items: center; padding-left: 8px; overflow: hidden; }
.help { flex: none; width: 18px; height: 18px; border: 1px solid #555; border-radius: 50%; font-size: 14px; font-weight: 700; line-height: 16px; text-align: center; color: #2c6e9c; background: #f0f2f4; }
.search input { width: 57px; border: 0; outline: 0; background: none; font: 15px/24px "Open Sans", sans-serif; padding: 0; margin-left: 13px; }
.search input::placeholder { color: #6b6b6b; opacity: 1; }

.toolbar { display: grid; grid-template-columns: 278px 41px 109px 41px 41px 79px 41px 41px 41px; height: 44px; padding: 3px 0; }
.group { display: flex; align-items: center; justify-content: space-evenly; border-right: 1px solid #c4c4c4; padding-top: 2px; }
.group:first-child { padding: 2px 4px 0 8px; justify-content: space-between; }
.group:last-child { border: 0; }
.tool svg { width: 28px; height: 28px; overflow: visible; }
.drop { width: 8px; height: 5px; background: #444; clip-path: polygon(0 0, 100% 0, 50% 100%); }

.ribbon { display: grid; grid-template-columns: 121px 254px 87px 78px 106px 57px 182px 223px 150px; height: 34px; background: #c4c8d4; border-top: 1px solid #858585; }
.ribbon button { background: #d4d4d4; border-right: 1px solid #858585; border-bottom: 1px solid #858585; padding-top: 2px; }
.ribbon .active { background: #f7f7f7; font-weight: 700; color: #333; }

.work { flex: 1; display: flex; min-height: 0; }
.panel { position: relative; flex: none; width: 290px; border-right: 1px solid #858585; border-left: 1px solid #bdbdbd; display: flex; flex-direction: column; padding-right: 2px; }
.strip { height: 5px; border: 1px solid #a9c4c4; border-left: 0; background: #fff; }
.splitter { height: 25px; border-bottom: 1px solid #c4c4c4; display: flex; justify-content: center; align-items: center; }
.knob { width: 10px; height: 10px; border-radius: 50%; border: 1px solid #8c8c8c; background: #d5d5d5; }
.ptabs { position: relative; display: flex; height: 38px; margin-top: 4px; border-top: 1px solid #858585; overflow: hidden; }
.ptabs > button { flex: none; width: 52px; display: flex; align-items: center; justify-content: center; background: #d4d4d4; border-right: 1px solid #858585; border-bottom: 1px solid #858585; }
.ptabs > .active { width: 53px; background: #f7f7f7; border-bottom: 0; padding-left: 2px; }
.ptabs > button > svg { width: 28px; height: 28px; }
.ptabs > button:nth-child(6) { justify-content: flex-start; padding-left: 10px; }
.pscroll { position: absolute; right: 0; bottom: 1px; display: flex; background: #b5b5b5; gap: 1px; border: 1px solid #b5b5b5; border-right: 0; }
.pscroll button { width: 21px; height: 21px; background: #f7f7f7; display: flex; align-items: center; justify-content: center; }
.pscroll svg { width: 8px; height: 10px; }
.filter { height: 37px; margin: 1px 3px 0 4px; border: 1px solid #c4c4c4; display: flex; align-items: center; padding-left: 4px; gap: 2px; }
.filter svg { width: 28px; height: 28px; }
.caret { width: 7px; height: 4px; background: #333; clip-path: polygon(0 0, 100% 0, 50% 100%); margin-top: 6px; }
.tree { padding-top: 2px; overflow: hidden; }
.row { height: 32px; display: flex; align-items: center; white-space: pre; overflow: hidden; }
.row > svg { width: 28px; height: 28px; margin-right: 6px; margin-bottom: 4px; }
.row.root > svg { margin-left: 4px; }
.expand, .blank { flex: none; width: 6px; height: 12px; margin: 0 19px 4px 14px; }
.expand { background: #5c5c5c; clip-path: polygon(0 0, 100% 50%, 0 100%); }
.rollback { height: 5px; margin: -2px 0 auto; background: #2f8cc8; border-bottom: 1px solid #1c1f9c; z-index: 1; }
.hscroll { height: 26px; background: #efefef; border-top: 1px solid #fff; padding: 7px 0 0 26px; }
.thumb { width: 116px; height: 11px; background: #868686; }
.foot { height: 5px; border-bottom: 1px solid #bdbdbd; background: #f7f7f7; }
.handle { position: absolute; left: 286px; top: 366px; z-index: 1; width: 16px; height: 59px; background: #f7f7f7; border: 1px solid #858585; border-left: 0; display: flex; align-items: center; justify-content: center; }

.viewport { position: relative; flex: 1; min-width: 0; background: #c4c8d4; }
.model { width: 100%; height: auto; }
.dk { fill: #50525e; }
.lt { fill: #7f8397; }
.slate { fill: #797e90; }
.fl { fill: #454752; }
.rim { fill: #5d606e; }
.axis { font: 300 17px Lato, sans-serif; }
.axis.small { font-size: 12px; font-weight: 400; }
.views { position: absolute; top: 4px; right: 6px; display: flex; height: 34px; align-items: center; }
.vtool { width: 38px; display: flex; justify-content: center; }
.vtool svg { width: 28px; height: 28px; overflow: visible; }
.vdrop { width: 7px; height: 5px; margin: 0 4px; background: #858a96; clip-path: polygon(0 0, 100% 0, 50% 100%); }
.mark { position: absolute; left: 298px; bottom: -8px; font: 700 40px/48px "DejaVu Sans", sans-serif; color: rgba(185, 188, 190, .35); }

.bottom { display: flex; height: 24px; border-top: 1px solid #858585; background: #f7f7f7; }
.nav { display: flex; gap: 1px; padding: 0 1px 0 2px; background: #8f909e; border-top: 1px solid #222; }
.nav button { width: 23px; height: 23px; background: #a8abbc; border: 1px solid #8f909e; display: flex; align-items: center; justify-content: center; }
.nav svg { width: 22px; height: 22px; fill: #85889a; stroke: #85889a; }
.btab { width: 95px; background: #d4d4d4; border-right: 1px solid #858585; }
.btab.active { width: 99px; padding-left: 6px; background: #f7f7f7; font-weight: 700; color: #000; }
.btab.study { width: 238px; padding-right: 12px; }
</style>
